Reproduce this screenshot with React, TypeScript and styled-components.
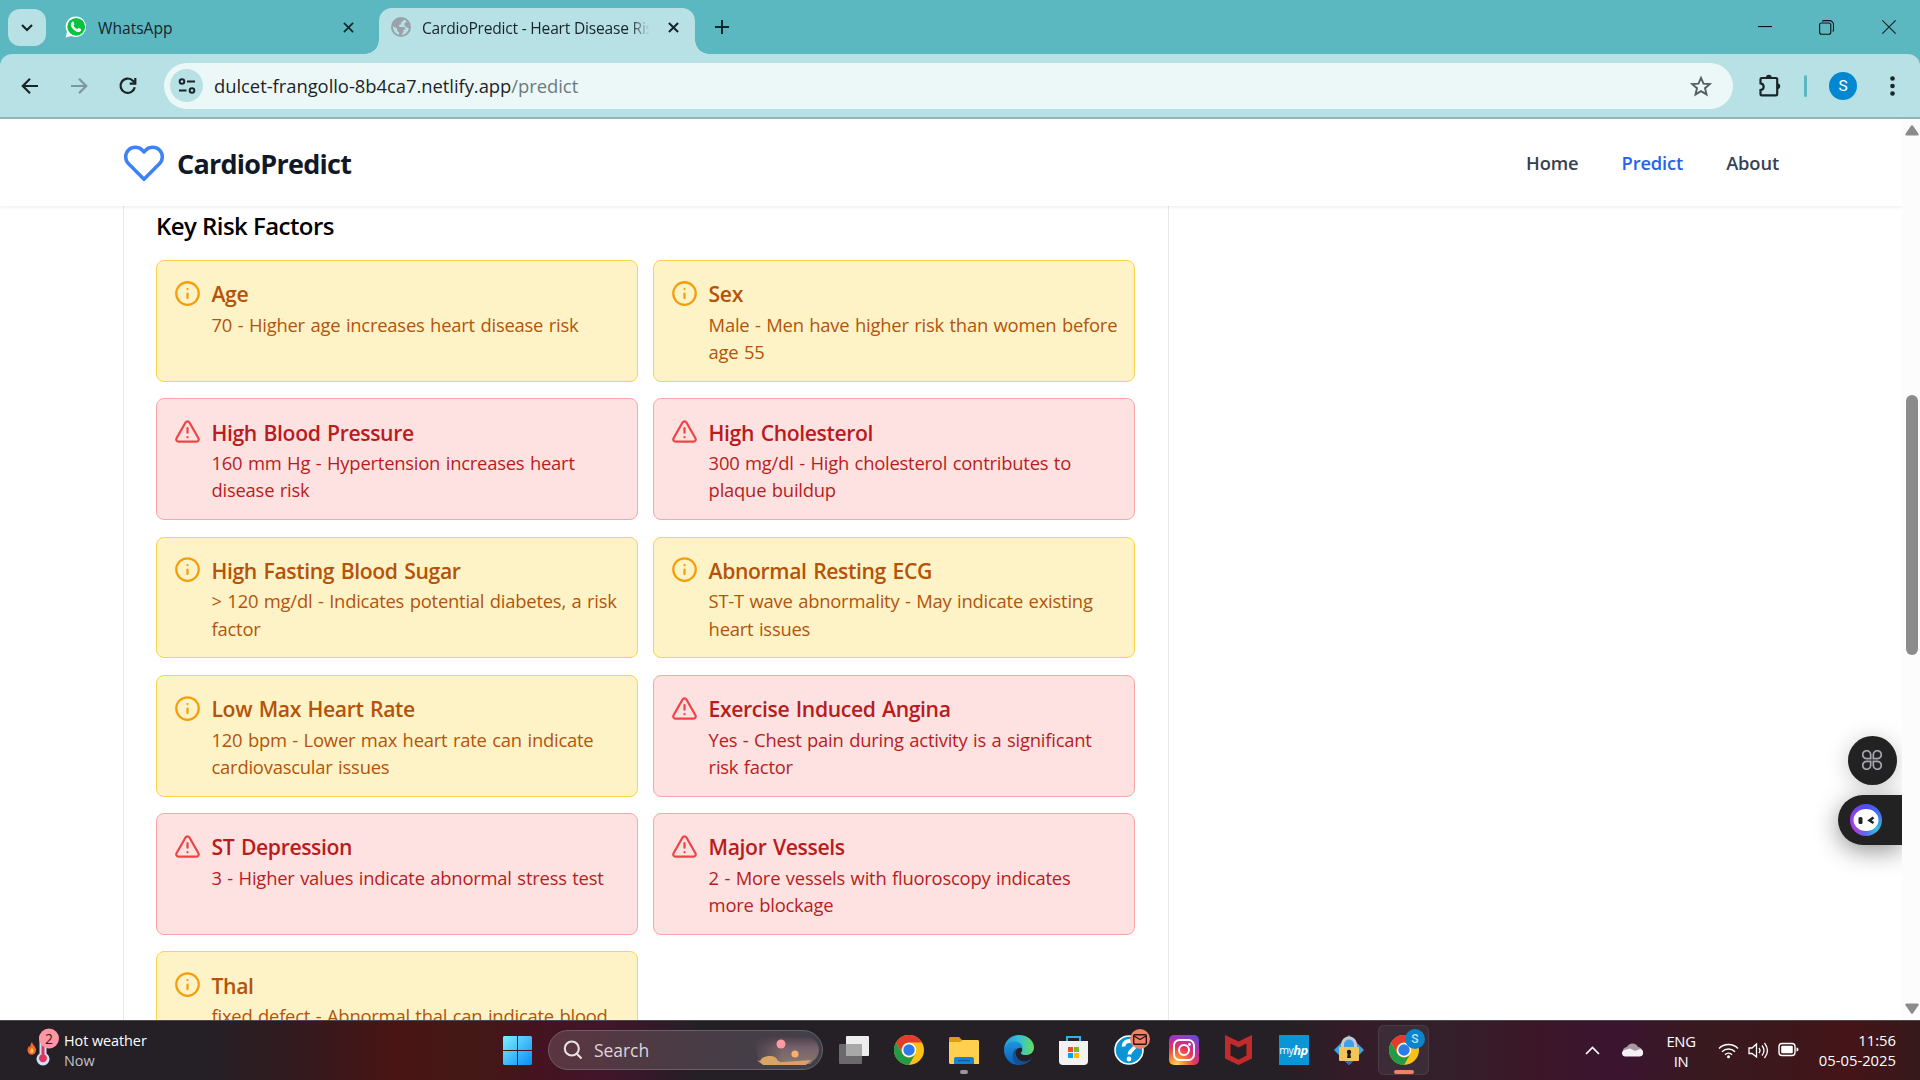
import React from "react";
import styled, { createGlobalStyle, css } from "styled-components";

const Global = createGlobalStyle`
  * { box-sizing: border-box; }
  html, body { margin: 0; padding: 0; overflow: hidden; background: #fff; }
  body { font-family: "Open Sans", "Noto Sans", sans-serif; color: #000; }
  svg { display: block; flex: none; }
`;

const Screen = styled.div`
  width: 1920px;
  height: 1080px;
  display: flex;
  flex-direction: column;
  overflow: hidden;
`;

/* ---------- browser chrome ---------- */

const TabStrip = styled.div`
  height: 54px;
  flex: none;
  display: flex;
  align-items: flex-start;
  background: #5bb8c1;
  padding: 8px 23px 0 8px;
`;

const TabSearch = styled.div`
  width: 38px;
  height: 37px;
  margin-top: 1px;
  border-radius: 12px;
  background: #b7e1e4;
  display: grid;
  place-items: center;
`;

const Tab = styled.div<{ $active?: boolean; $width: number }>`
  position: relative;
  width: ${(p) => p.$width}px;
  height: 46px;
  display: flex;
  align-items: center;
  padding: 0 ${(p) => (p.$active ? 16 : 6)}px 8px ${(p) => (p.$active ? 12 : 19)}px;
  font-size: 15.6px;
  letter-spacing: ${(p) => (p.$active ? -0.22 : 0)}px;
  color: #17252a;
  ${(p) =>
    p.$active &&
    css`
      background: #b7e1e4;
      border-radius: 13px 13px 0 0;
      &::before,
      &::after {
        content: "";
        position: absolute;
        bottom: 0;
        width: 14px;
        height: 14px;
      }
      &::before {
        left: -14px;
        background: radial-gradient(circle at 0 0, transparent 13.5px, #b7e1e4 14px);
      }
      &::after {
        right: -14px;
        background: radial-gradient(circle at 100% 0, transparent 13.5px, #b7e1e4 14px);
      }
    `}
`;

const TabTitle = styled.span<{ $fade?: boolean }>`
  flex: 1;
  margin-left: 11px;
  margin-right: 18px;
  padding-top: 1px;
  overflow: hidden;
  white-space: nowrap;
  line-height: 22px;
  ${(p) => p.$fade && css`mask-image: linear-gradient(90deg, #000 91%, transparent 100%);`}
`;

const TabGap = styled.i`
  width: 19px;
`;

const NewTab = styled.div`
  width: 24px;
  height: 38px;
  margin-left: 15px;
  display: grid;
  place-items: center;
`;

const WindowControls = styled.div`
  margin-left: auto;
  height: 38px;
  display: flex;
  align-items: center;
  gap: 47px;
`;

const ToolbarBack = styled.div`
  flex: none;
  height: 65px;
  background: #5bb8c1;
`;

const Toolbar = styled.div`
  height: 65px;
  display: flex;
  align-items: center;
  background: #b7e1e4;
  border-bottom: 2px solid #8eb5ba;
  border-radius: 12px 12px 0 0;
  padding: 0 16px 0 18px;
`;

const NavIcons = styled.div`
  display: flex;
  gap: 25px;
  width: 146px;
`;

const Omnibox = styled.div`
  width: 1569px;
  height: 46px;
  border-radius: 23px;
  background: #ecf8f8;
  display: flex;
  align-items: center;
  padding: 0 20px 0 6px;
`;

const SiteInfo = styled.div`
  width: 33px;
  height: 33px;
  border-radius: 50%;
  background: #b7e1e4;
  display: grid;
  place-items: center;
`;

const Url = styled.div`
  flex: 1;
  margin-left: 11px;
  font-size: 18.4px;
  letter-spacing: -0.03px;
  line-height: 26px;
  color: #1b2427;
  span { color: #6b7a7d; }
`;

const PuzzleSlot = styled.div`
  margin-left: 24px;
`;

const ToolbarDivider = styled.div`
  width: 3px;
  height: 22px;
  border-radius: 2px;
  background: #5bb8c1;
  margin: 0 22px 0 23px;
`;

const Avatar = styled.div`
  width: 28px;
  height: 28px;
  border-radius: 50%;
  background: #0288d1;
  color: #fff;
  font: 400 15.5px/29px Roboto, sans-serif;
  text-align: center;
  margin-right: 33px;
`;

/* ---------- page ---------- */

const Viewport = styled.div`
  height: 901px;
  flex: none;
  display: flex;
`;

const Page = styled.div`
  position: relative;
  width: 1902px;
  height: 901px;
  overflow: hidden;
`;

const SiteHeader = styled.header`
  position: relative;
  height: 87px;
  display: flex;
  align-items: center;
  padding: 0 123px 0 123px;
  background: #fff;
  box-shadow: 0 1px 4px rgba(0, 0, 0, 0.08);
`;

const Brand = styled.div`
  margin-left: 12px;
  font-size: 27px;
  font-weight: 700;
  letter-spacing: -0.75px;
  line-height: 36px;
  color: #111827;
  padding-top: 2px;
`;

const Nav = styled.nav`
  margin-left: auto;
  display: flex;
  gap: 43px;
`;

const NavLink = styled.a<{ $active?: boolean }>`
  font-size: 18.3px;
  font-weight: 600;
  letter-spacing: -0.12px;
  line-height: 26px;
  color: ${(p) => (p.$active ? "#2563eb" : "#374151")};
`;

const ResultPanel = styled.section`
  width: 1046px;
  height: 900px;
  margin-left: 123px;
  padding: 2px 32px 0;
  border: solid #e5e7eb;
  border-width: 0 1px;
`;

const SectionTitle = styled.h3`
  margin: 0 0 16px;
  height: 36px;
  font-size: 24px;
  font-weight: 600;
  letter-spacing: -0.55px;
  line-height: 36px;
`;

const FactorGrid = styled.div`
  display: grid;
  grid-template-columns: 481.5px 481.5px;
  grid-auto-rows: 121.7px;
  gap: 16.6px 15.6px;
`;

const FactorCard = styled.article<{ $high?: boolean }>`
  display: flex;
  align-items: flex-start;
  padding: 18.8px 10px 0 17px;
  border-radius: 8px;
  border: 1px solid ${(p) => (p.$high ? "#fca5a5" : "#fcd34d")};
  background: ${(p) => (p.$high ? "#fee2e2" : "#fef3c7")};
  color: ${(p) => (p.$high ? "#b91c1c" : "#b45309")};
`;

const FactorIcon = styled.svg<{ $high?: boolean }>`
  width: 27px;
  height: 27px;
  fill: none;
  stroke: ${(p) => (p.$high ? "#ef4444" : "#f59e0b")};
  stroke-width: 2;
  stroke-linecap: round;
  stroke-linejoin: round;
`;

const FactorText = styled.div`
  margin-left: 10.5px;
  padding-top: 0.5px;
  white-space: nowrap;
`;

const FactorName = styled.div`
  font-size: 21.2px;
  font-weight: 600;
  letter-spacing: -0.4px;
  word-spacing: 1.5px;
  line-height: 28px;
`;

const FactorDetail = styled.div`
  margin-top: 2.5px;
  font-size: 18.4px;
  letter-spacing: -0.22px;
  word-spacing: 1px;
  line-height: 27.3px;
`;

const Scrollbar = styled.div`
  width: 18px;
  background: #fcfcfc;
  display: flex;
  flex-direction: column;
  align-items: center;
  padding: 6px 0 6px 1px;
`;

const Thumb = styled.div`
  width: 12px;
  height: 260px;
  margin-top: 259px;
  margin-bottom: auto;
  border-radius: 6px;
  background: #8b8b8b;
`;

const FloatingTools = styled.div`
  position: absolute;
  right: 0;
  top: 617px;
  display: flex;
  flex-direction: column;
  align-items: flex-end;
  gap: 10px;
`;

const ToolBubble = styled.div`
  width: 49px;
  height: 49px;
  margin-right: 5px;
  padding: 0 1px 1px 0;
  border-radius: 50%;
  background: #222;
  display: grid;
  place-items: center;
  box-shadow: 0 3px 22px rgba(0, 0, 0, 0.22);
`;

const ToolPill = styled.div`
  width: 64px;
  height: 50px;
  border-radius: 25px 0 0 25px;
  background: #222;
  display: flex;
  align-items: center;
  padding-left: 12px;
  box-shadow: 0 6px 24px rgba(0, 0, 0, 0.42);
`;

const BotRing = styled.div`
  width: 32px;
  height: 32px;
  border-radius: 50%;
  background: conic-gradient(#4a4cf5, #3f7ff0 80deg, #2fc4d8 130deg, #5a6cf0 180deg, #a53fe0 230deg, #9a3df0 280deg, #4a4cf5);
  display: grid;
  place-items: center;
`;

/* ---------- taskbar ---------- */

const Taskbar = styled.footer`
  height: 60px;
  flex: none;
  display: flex;
  align-items: center;
  padding-bottom: 1px;
  border-top: 1px solid #4b474b;
  color: #fff;
  background: linear-gradient(
    90deg,
    #242026 0, #242026 200px, #331a1e 300px, #4a1414 395px, #431915 470px,
    #451320 540px, #43152a 600px, #34192a 650px, #242026 700px, #242026 1280px,
    #351b28 1350px, #33202a 1440px, #3c1628 1540px, #3b1530 1620px, #391920 1700px,
    #3d171b 1790px, #451418 1850px, #36191b 1920px
  );
`;

const Weather = styled.div`
  width: 476px;
  padding-left: 26px;
  display: flex;
  align-items: center;
  gap: 5px;
`;

const WeatherArt = styled.div`
  padding-bottom: 6px;
`;

const WeatherText = styled.div`
  font-size: 14.4px;
  letter-spacing: -0.05px;
  line-height: 20px;
  padding-top: 1px;
  span { display: block; color: #c6c2c6; }
`;

const StartSlot = styled.div`
  width: 72px;
  padding-left: 27px;
`;

const SearchBox = styled.div`
  width: 275px;
  height: 40px;
  border-radius: 20px;
  border: 1px solid #6d5f68;
  background: linear-gradient(90deg, #5b3541, #4b3b44 45%, #40404a);
  display: flex;
  align-items: center;
  padding: 0 3px 0 14px;
  font-size: 17.5px;
  letter-spacing: -0.05px;
  color: #ddd5da;
  span { margin-left: 11px; flex: 1; }
`;

const Apps = styled.div`
  display: flex;
  margin-left: 3px;
`;

const AppSlot = styled.div<{ $active?: boolean }>`
  position: relative;
  width: 51px;
  height: 50px;
  margin: 0 2px;
  display: grid;
  place-items: center;
  border-radius: 6px;
  ${(p) => p.$active && css`background: #3b2c37; box-shadow: inset 0 0 0 1px #4a3b46;`}
`;

const RunMark = styled.i<{ $active?: boolean }>`
  position: absolute;
  bottom: 1px;
  width: ${(p) => (p.$active ? 20 : 8)}px;
  height: 4px;
  border-radius: 2px;
  background: ${(p) => (p.$active ? "#f4806a" : "#9a979b")};
`;

const AppBadge = styled.div<{ $mail?: boolean }>`
  position: absolute;
  left: 27px;
  top: 4px;
  width: 20px;
  height: 20px;
  border-radius: 50%;
  display: grid;
  place-items: center;
  background: ${(p) => (p.$mail ? "#f4806a" : "#0a84cc")};
  color: #b8e0f5;
  font: 500 12px/20px Roboto, sans-serif;
`;

const MyHp = styled.div`
  width: 30px;
  height: 30px;
  background: #0a96d6;
  display: flex;
  align-items: center;
  justify-content: center;
  font-size: 10.5px;
  letter-spacing: -0.5px;
  line-height: 30px;
  b { font-size: 13px; font-style: italic; }
`;

const Tray = styled.div`
  margin-left: auto;
  padding-right: 24px;
  display: flex;
  align-items: center;
  font-size: 14.8px;
  letter-spacing: -0.3px;
  line-height: 20px;
`;

const CloudIcon = styled.svg`
  margin-left: 22px;
`;

const Language = styled.div`
  width: 40px;
  margin-left: 18px;
  text-align: center;
  padding-top: 1px;
`;

const Status = styled.div`
  display: flex;
  gap: 9px;
  margin-left: 17px;
`;

const Clock = styled.div`
  width: 84px;
  margin-left: 13px;
  text-align: right;
  white-space: nowrap;
  letter-spacing: 0;
`;

/* ---------- drawings ---------- */

const Cross = ({ size, w }: { size: number; w: number }) => (
  <svg width={size} height={size} viewBox="0 0 12 12" fill="none" stroke="#15262a" strokeWidth={w}>
    <path d="M1 1l10 10M11 1L1 11" />
  </svg>
);

const WhatsAppIcon = () => (
  <svg width="22" height="22" viewBox="0 0 22 22">
    <path d="M11 .5a10.300 10.300 0 0 0-9 15.400L.6 21.500l5.700-1.400A10.300 10.300 0 1 0 11 .5z" fill="#fff" />
    <circle cx="11.200" cy="10.800" r="8.900" fill="#08c240" />
    <path d="M7.300 5.800c.5-.5 1-.3 1.200.1l.9 2c.1.300 0 .6-.9 1.600.8 1.800 2.100 2.900 3.900 3.600.9-1.100 1-1.300 1.400-1.100l2.100 1c.5.3.3 2.100-1 2.700-1.200.6-3 .3-5.200-1.200-2.300-1.500-3.800-3.700-3.900-5.400 0-1.600.8-2.800 1.500-3.300z" fill="#fff" />
  </svg>
);

const GlobeIcon = () => (
  <svg width="20" height="20" viewBox="0 0 20 20">
    <circle cx="10" cy="10" r="9" fill="#b7e1e4" stroke="#98a2a8" strokeWidth="2" />
    <path d="M9.500 1L13 1.500c.2 2-1 3-2.800 3.500v2l-2 1v2h5l1.800 2.500h-2.500v2.500L9.500 19C8 18.500 8 16.500 8 15.500L6 13.500v-2L1 8.500C1.500 4 5.500 1 9.500 1z" fill="#98a2a8" />
    <path d="M13.500 6.500l2-2 2.500 2 1 4-2 .5-3.500-2z" fill="#98a2a8" />
  </svg>
);

const RestoreIcon = () => (
  <svg width="15" height="15" viewBox="0 0 15 15" fill="none" stroke="#111" strokeWidth="1.100">
    <rect x=".6" y="3" width="11.200" height="11.200" rx="2" />
    <path d="M3.200 1.200C4 .6 4 .6 5 .6h5.500a4 4 0 0 1 4 4V9.500c0 1-.2 1.500-.8 2" />
  </svg>
);

const ChromeIcon = () => (
  <svg width="30" height="30" viewBox="0 0 30 30">
    <circle cx="15" cy="15" r="15" fill="#fbc116" />
    <path d="M2 7.500A15 15 0 0 1 28 7.500H15a7.500 7.500 0 0 0-6.500 11.250z" fill="#e33b2e" />
    <path d="M2 7.500L8.500 18.750A7.500 7.500 0 0 0 21.500 18.750L15 30A15 15 0 0 1 2 7.500z" fill="#229a48" />
    <circle cx="15" cy="15" r="7.200" fill="#fff" />
    <circle cx="15" cy="15" r="5.700" fill="#2d7bea" />
  </svg>
);

const WeatherIcon = () => (
  <svg width="33" height="38" viewBox="0 0 33 38">
    <path d="M6 14c.5 3 4 4.500 4 8a4 4.500 0 0 1-8.500 0c0-2 1-3 1.500-4l1 1.500C4.300 17.500 4.500 16 6 14z" fill="#f46a2d" />
    <path d="M6 20c2 2 2 5-.2 5S3.500 22.500 6 20z" fill="#ffc65a" />
    <path d="M13.500 8h7v17.500a6.500 6.500 0 1 1-7 0z" fill="#c9e2f8" />
    <path d="M15.500 8h3v18.500a4 4 0 1 1-3 0z" fill="#e0345a" />
    <circle cx="23" cy="10.500" r="10" fill="#ff96a4" />
    <text x="23" y="15.500" textAnchor="middle" fontSize="14" fill="#222" fontFamily="Open Sans">2</text>
  </svg>
);

const StartIcon = () => (
  <svg width="29" height="29" viewBox="0 0 29 29">
    <defs>
      <linearGradient id="win" x1="0" y1="0" x2="1" y2="1">
        <stop offset="0" stopColor="#7df0ff" />
        <stop offset="1" stopColor="#0a8cf5" />
      </linearGradient>
    </defs>
    <path d="M1 0h13v14H0V1zM15 0h13l1 1v13H15zM0 15h14v14H1l-1-1zM15 15h14v13l-1 1H15z" fill="url(#win)" />
  </svg>
);

const SearchArt = () => (
  <svg width="66" height="34" viewBox="0 0 66 34">
    <defs>
      <linearGradient id="sky" x1="0" y1="0" x2="0" y2="1">
        <stop offset="0" stopColor="#463d46" />
        <stop offset=".4" stopColor="#75606a" />
        <stop offset="1" stopColor="#887870" />
      </linearGradient>
      <linearGradient id="fade"><stop offset="0" stopColor="#000" /><stop offset=".45" stopColor="#fff" /></linearGradient>
      <mask id="art"><rect width="66" height="34" fill="url(#fade)" /></mask>
    </defs>
    <path d="M0 3h49a15 14 0 0 1 11 25l-3 3H6z" fill="url(#sky)" mask="url(#art)" />
    <path d="M4 27.500c8 1.500 14 1.500 20 2l34-2.500-5 5H18c-7 0-10-2-14-4.500z" fill="#dba06a" />
    <path d="M7 29c0-3 4-6 9-6 5.500 0 8 2 8.500 4.500l3 1.500-3 3H10z" fill="#d9a566" />
    <circle cx="28" cy="11" r="4.500" fill="#ff9ba0" />
    <circle cx="42" cy="21" r="3.600" fill="#f8b06a" />
  </svg>
);

const TaskViewIcon = () => (
  <svg width="30" height="28" viewBox="0 0 30 28">
    <rect x="7" width="23" height="20" rx="1" fill="#ededed" />
    <rect y="8" width="23" height="20" rx="1" fill="#6b696c" />
    <rect x="7" y="8" width="16" height="12" fill="#a9a8a9" />
  </svg>
);

const FolderIcon = () => (
  <svg width="30" height="27" viewBox="0 0 30 27">
    <path d="M1 0h9l3 3h16v6H0V1z" fill="#dd9d10" />
    <path d="M0 5h11l3-2h15l1 1v23H1l-1-1z" fill="#ffd04f" />
    <path d="M7 20h16a2 2 0 0 1 2 2v5H5v-5a2 2 0 0 1 2-2z" fill="#1383d6" />
    <path d="M9 23.500h12" stroke="#0a5c9e" strokeWidth="1.200" />
  </svg>
);

const EdgeIcon = () => (
  <svg width="30" height="30" viewBox="0 0 30 30">
    <defs>
      <linearGradient id="edgeTop"><stop offset="0" stopColor="#2597d9" /><stop offset=".5" stopColor="#35c1d8" /><stop offset="1" stopColor="#66dd55" /></linearGradient>
      <linearGradient id="edgeLow" x1="0" y1="0" x2="0" y2="1"><stop offset="0" stopColor="#1e94dd" /><stop offset="1" stopColor="#0b60b8" /></linearGradient>
    </defs>
    <path d="M0 14C.5 6 7 0 15 0c9 0 15 6 15 12.500 0 5-4 7.500-8 7.500-3.500 0-5.500-1-5-2.200 2-2 1.500-5-.5-6.500-5-3.500-12-2-16.500 2.700z" fill="url(#edgeTop)" />
    <path d="M0 15c1-6 6-8.500 10.500-8.500 5 0 8 3 8 6.500-5-1-8 2-7 6 1 5 5 8 10 8-2 2-5 3-7 3C6 30 0 23 0 15z" fill="url(#edgeLow)" />
    <path d="M12 13c-3 7 1 13.500 8 13.500 3 0 6-1.500 8-3.500-1.500 3.500-7 7-12.500 7C9 29 6 19 12 13z" fill="#124f98" />
  </svg>
);

const StoreIcon = () => (
  <svg width="29" height="30" viewBox="0 0 29 30">
    <path d="M8 7V2h13v5" fill="none" stroke="#28b5ee" strokeWidth="2" />
    <path d="M0 6h29v20a4 4 0 0 1-4 4H4a4 4 0 0 1-4-4z" fill="#f2f2f2" />
    <path d="M9 12h5v5H9z" fill="#e8502b" /><path d="M15 12h5v5h-5z" fill="#7fba1e" />
    <path d="M9 18h5v5H9z" fill="#0aa0e8" /><path d="M15 18h5v5h-5z" fill="#fdb913" />
  </svg>
);

const HelpIcon = () => (
  <svg width="30" height="30" viewBox="0 0 30 30">
    <circle cx="15" cy="15" r="14" fill="#0a96d6" stroke="#fff" strokeWidth="1.600" />
    <path d="M9.500 11.500c0-4 3-5.500 6-5.500s5.500 1.800 5.500 4.800c0 3.800-5.500 4-5.500 8.700" fill="none" stroke="#fff" strokeWidth="3.800" />
    <circle cx="15" cy="24" r="2.400" fill="#fff" />
  </svg>
);

const MailIcon = () => (
  <svg width="14" height="11" viewBox="0 0 14 11" fill="none" stroke="#2b1512" strokeWidth="1.400">
    <rect x=".7" y=".7" width="12.600" height="9.600" rx="1" /><path d="M1 2l6 3.500L13 2" />
  </svg>
);

const InstagramIcon = () => (
  <svg width="30" height="30" viewBox="0 0 30 30">
    <defs>
      <radialGradient id="ig" cx=".25" cy="1" r="1.100">
        <stop offset="0" stopColor="#ffd668" /><stop offset=".25" stopColor="#fb8a35" /><stop offset=".55" stopColor="#e4355f" /><stop offset=".8" stopColor="#b032b0" /><stop offset="1" stopColor="#6a4bd0" />
      </radialGradient>
    </defs>
    <rect width="30" height="30" rx="5" fill="url(#ig)" />
    <g fill="none" stroke="#fff" strokeWidth="2"><rect x="5" y="5" width="20" height="20" rx="5.500" /><circle cx="15" cy="15" r="5" /></g>
    <circle cx="20.500" cy="9.500" r="1.400" fill="#fff" />
  </svg>
);

const McAfeeIcon = () => (
  <svg width="27" height="30" viewBox="0 0 27 30">
    <path d="M0 0l13.500 6.500L27 0v23.500L13.500 30 0 23.500zM5.500 8.500v12l8 4.200 8-4.200v-12l-8 4z" fill="#c32a2c" fillRule="evenodd" />
  </svg>
);

const LockIcon = () => (
  <svg width="30" height="30" viewBox="0 0 30 30">
    <path d="M15 0l15 15-15 15L0 15z" fill="#3aa5e0" />
    <path d="M15 30l-5-5h10z" fill="#1672d8" />
    <path d="M8.500 13V9.500a6.500 6.500 0 0 1 13 0V13" fill="none" stroke="#c9c9c9" strokeWidth="3" />
    <rect x="5" y="12" width="20" height="14" rx="1" fill="#f0c65a" />
    <circle cx="15" cy="17" r="2.200" fill="#1c1508" /><path d="M14 17h2l1 6h-4z" fill="#1c1508" />
  </svg>
);

/* ---------- data ---------- */

type FactorInfo = { name: string; lines: string[]; high?: boolean };

const factors: FactorInfo[] = [
  { name: "Age", lines: ["70 - Higher age increases heart disease risk"] },
  { name: "Sex", lines: ["Male - Men have higher risk than women before", "age 55"] },
  { name: "High Blood Pressure", lines: ["160 mm Hg - Hypertension increases heart", "disease risk"], high: true },
  { name: "High Cholesterol", lines: ["300 mg/dl - High cholesterol contributes to", "plaque buildup"], high: true },
  { name: "High Fasting Blood Sugar", lines: ["> 120 mg/dl - Indicates potential diabetes, a risk", "factor"] },
  { name: "Abnormal Resting ECG", lines: ["ST-T wave abnormality - May indicate existing", "heart issues"] },
  { name: "Low Max Heart Rate", lines: ["120 bpm - Lower max heart rate can indicate", "cardiovascular issues"] },
  { name: "Exercise Induced Angina", lines: ["Yes - Chest pain during activity is a significant", "risk factor"], high: true },
  { name: "ST Depression", lines: ["3 - Higher values indicate abnormal stress test"], high: true },
  { name: "Major Vessels", lines: ["2 - More vessels with fluoroscopy indicates", "more blockage"], high: true },
  { name: "Thal", lines: ["fixed defect - Abnormal thal can indicate blood"] },
];

const Factor = ({ name, lines, high }: FactorInfo) => (
  <FactorCard $high={high}>
    <FactorIcon viewBox="0 0 24 24" $high={high}>
      {high ? (
        <path d="m21.730 18-8-14a2 2 0 0 0-3.480 0l-8 14A2 2 0 0 0 4 21h16a2 2 0 0 0 1.730-3M12 9v4M12 17h.01" />
      ) : (
        <path d="M22 12a10 10 0 1 1-20 0 10 10 0 0 1 20 0M12 16v-4M12 8h.01" />
      )}
    </FactorIcon>
    <FactorText>
      <FactorName>{name}</FactorName>
      <FactorDetail>
        {lines.map((line) => (
          <div key={line}>{line}</div>
        ))}
      </FactorDetail>
    </FactorText>
  </FactorCard>
);

const BrowserTop = () => (
  <>
    <TabStrip>
      <TabSearch>
        <svg width="12" height="8" viewBox="0 0 12 8" fill="none" stroke="#15262a" strokeWidth="2.200"><path d="M1 1l5 5 5-5" /></svg>
      </TabSearch>
      <Tab $width={314}>
        <WhatsAppIcon />
        <TabTitle>WhatsApp</TabTitle>
        <Cross size={11} w={1.9} />
      </Tab>
      <TabGap />
      <Tab $active $width={316}>
        <GlobeIcon />
        <TabTitle $fade>CardioPredict - Heart Disease Risk</TabTitle>
        <Cross size={11} w={2.2} />
      </Tab>
      <NewTab>
        <svg width="14" height="14" viewBox="0 0 14 14" stroke="#15262a" strokeWidth="2"><path d="M7 0v14M0 7h14" /></svg>
      </NewTab>
      <WindowControls>
        <svg width="14" height="2" viewBox="0 0 14 2"><path d="M0 .5h14" stroke="#111" strokeWidth="1.200" /></svg>
        <RestoreIcon />
        <Cross size={16} w={0.9} />
      </WindowControls>
    </TabStrip>
    <ToolbarBack>
      <Toolbar>
        <NavIcons>
          <svg width="24" height="24" viewBox="0 0 24 24" fill="none" stroke="#1b2427" strokeWidth="2.200"><path d="M20 12H5M12 4.800L4.800 12l7.200 7.200" /></svg>
          <svg width="24" height="24" viewBox="0 0 24 24" fill="none" stroke="#7c979b" strokeWidth="2.200"><path d="M4 12h15M12 4.800l7.200 7.200-7.200 7.200" /></svg>
          <svg width="24" height="24" viewBox="0 0 24 24" fill="none" stroke="#1b2427" strokeWidth="2.200"><path d="M18.800 13.200a7.200 7.200 0 1 1-1.700-6.300L19 8.800" /><path d="M19.300 4v5.600h-5.600" /></svg>
        </NavIcons>
        <Omnibox>
          <SiteInfo>
            <svg width="18" height="18" viewBox="0 0 18 18" fill="none" stroke="#1b2427" strokeWidth="2"><circle cx="4" cy="4.500" r="2.300" /><path d="M9 4.500h8M1 13.500h7.500" /><circle cx="14" cy="13.500" r="2.300" /></svg>
          </SiteInfo>
          <Url>dulcet-frangollo-8b4ca7.netlify.app<span>/predict</span></Url>
          <svg width="24" height="24" viewBox="0 0 24 24" fill="none" stroke="#555f63" strokeWidth="1.900"><path d="M12 3.800l2.500 5.800 6.300.5-4.800 4.100 1.500 6.200-5.500-3.300-5.500 3.300L8 14.200l-4.800-4.100 6.300-.5z" /></svg>
        </Omnibox>
        <PuzzleSlot>
          <svg width="24" height="24" viewBox="0 0 24 24"><path d="M3.500 5.200a1.200 1.200 0 0 1 1.200-1.200H19a1.200 1.200 0 0 1 1.200 1.200v15A1.200 1.200 0 0 1 19 21.400H4.700a1.200 1.200 0 0 1-1.200-1.200V16c4.200-.5 4.200-6.200 0-6.700z" fill="none" stroke="#1b2427" strokeWidth="2.200" /><path d="M9 3.500a2.800 2.800 0 0 1 5.600 0zM20.500 9.500a2.800 2.800 0 0 1 0 5.600z" fill="#1b2427" /></svg>
        </PuzzleSlot>
        <ToolbarDivider />
        <Avatar>S</Avatar>
        <svg width="5" height="20" viewBox="0 0 5 20" fill="#1b2427"><circle cx="2.500" cy="2.500" r="2.300" /><circle cx="2.500" cy="10" r="2.300" /><circle cx="2.500" cy="17.500" r="2.300" /></svg>
      </Toolbar>
    </ToolbarBack>
  </>
);

export default function App() {
  return (
    <Screen>
      <Global />
      <BrowserTop />
      <Viewport>
        <Page>
          <SiteHeader>
            <svg width="42" height="42" viewBox="0 0 24 24" fill="none" stroke="#3b82f6" strokeWidth="2" strokeLinecap="round" strokeLinejoin="round">
              <path d="M20.840 4.610a5.500 5.500 0 0 0-7.780 0L12 5.670l-1.060-1.060a5.500 5.500 0 0 0-7.780 7.780l1.060 1.060L12 21.230l7.780-7.780 1.060-1.060a5.500 5.500 0 0 0 0-7.780z" />
            </svg>
            <Brand>CardioPredict</Brand>
            <Nav>
              <NavLink>Home</NavLink>
              <NavLink $active>Predict</NavLink>
              <NavLink>About</NavLink>
            </Nav>
          </SiteHeader>
          <ResultPanel>
            <SectionTitle>Key Risk Factors</SectionTitle>
            <FactorGrid>
              {factors.map((f) => (
                <Factor key={f.name} {...f} />
              ))}
            </FactorGrid>
          </ResultPanel>
          <FloatingTools>
            <ToolBubble>
              <svg width="20" height="20" viewBox="0 0 20 20" fill="none" stroke="#a9a5b3" strokeWidth="1.700">
                <path d="M8.700 8.700H5a4 4 0 1 1 3.700-3.800zM11.300 8.700H15a4 4 0 1 0-3.700-3.800zM8.700 11.300H5a4 4 0 1 0 3.700 3.800zM11.300 11.300H15a4 4 0 1 1-3.700 3.800z" />
              </svg>
            </ToolBubble>
            <ToolPill>
              <BotRing>
                <svg width="26" height="22" viewBox="0 0 26 22"><ellipse cx="13" cy="11" rx="12.500" ry="11" fill="#fff" /><rect x="5.500" y="8" width="4" height="7" rx="1.500" fill="#222" /><path d="M20.500 8.500l-4 3 4 2.500" fill="none" stroke="#222" strokeWidth="2.600" /></svg>
              </BotRing>
            </ToolPill>
          </FloatingTools>
        </Page>
        <Scrollbar>
          <svg width="14" height="11" viewBox="0 0 14 11"><path d="M6 .8q1-1 2 0l5.500 8q.5 1.700-1 1.700h-11q-1.500 0-1-1.700z" fill="#8b8b8b" /></svg>
          <Thumb />
          <svg width="14" height="11" viewBox="0 0 14 11"><path d="M6 10.200q1 1 2 0l5.500-8q.5-1.700-1-1.700h-11q-1.500 0-1 1.700z" fill="#8b8b8b" /></svg>
        </Scrollbar>
      </Viewport>
      <Taskbar>
        <Weather>
          <WeatherArt><WeatherIcon /></WeatherArt>
          <WeatherText>Hot weather<span>Now</span></WeatherText>
        </Weather>
        <StartSlot><StartIcon /></StartSlot>
        <SearchBox>
          <svg width="20" height="20" viewBox="0 0 20 20" fill="none" stroke="#e8e2e6" strokeWidth="2.100"><circle cx="8.800" cy="8.500" r="7" /><path d="M13.500 13.500l5 5" /></svg>
          <span>Search</span>
          <SearchArt />
        </SearchBox>
        <Apps>
          <AppSlot><TaskViewIcon /></AppSlot>
          <AppSlot><ChromeIcon /></AppSlot>
          <AppSlot><FolderIcon /><RunMark /></AppSlot>
          <AppSlot><EdgeIcon /></AppSlot>
          <AppSlot><StoreIcon /></AppSlot>
          <AppSlot><HelpIcon /><AppBadge $mail><MailIcon /></AppBadge></AppSlot>
          <AppSlot><InstagramIcon /></AppSlot>
          <AppSlot><McAfeeIcon /></AppSlot>
          <AppSlot><MyHp>my<b>hp</b></MyHp></AppSlot>
          <AppSlot><LockIcon /></AppSlot>
          <AppSlot $active><ChromeIcon /><AppBadge>S</AppBadge><RunMark $active /></AppSlot>
        </Apps>
        <Tray>
          <svg width="15" height="9" viewBox="0 0 15 9" fill="none" stroke="#fff" strokeWidth="1.700"><path d="M1 8l6.500-6.500L14 8" /></svg>
          <CloudIcon width="21" height="14" viewBox="0 0 21 14">
            <path d="M1 9a4 4 0 0 1 4-5 6 6 0 0 1 11 0 4 4 0 0 1 4 5z" fill="#a89aa4" />
            <path d="M3 13.500A3.300 3.300 0 0 1 2.500 7L8 5.500 13 8l5-2a3.800 3.800 0 0 1 0 7.500z" fill="#f4f2f4" />
          </CloudIcon>
          <Language>ENG<br />IN</Language>
          <Status>
            <svg width="21" height="17" viewBox="0 0 21 17" fill="none" stroke="#fff" strokeWidth="1.500"><path d="M1 6.500a13.500 13.500 0 0 1 19 0M4 9.700a9.200 9.200 0 0 1 13 0M7 12.700a5 5 0 0 1 7 0" /><circle cx="10.500" cy="14.800" r="1.500" fill="#fff" stroke="none" /></svg>
            <svg width="21" height="17" viewBox="0 0 21 17" fill="none" stroke="#fff" strokeWidth="1.300"><path d="M1 6h3l4.500-4v13L4 11.500H1zM11 6q2 2.500 0 5M14 3.500q4 5 0 10M16.500 1q6 7.500 0 15" /></svg>
            <svg width="21" height="15" viewBox="0 0 21 15"><rect x="1" y="1.500" width="16" height="12" rx="3" fill="none" stroke="#fff" strokeWidth="1.400" /><rect x="3.200" y="3.700" width="11.600" height="7.600" rx="1" fill="#fff" /><path d="M18.500 5.500q2 0 2 2t-2 2z" fill="#fff" /></svg>
          </Status>
          <Clock>11:56<br />05-05-2025</Clock>
        </Tray>
      </Taskbar>
    </Screen>
  );
}
